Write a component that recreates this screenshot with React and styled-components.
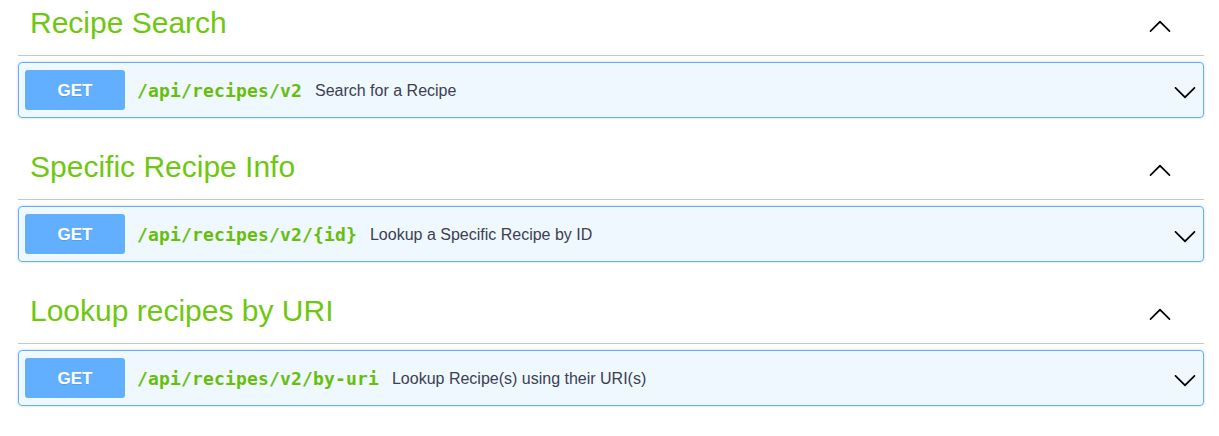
import React from 'react'
import styled, { createGlobalStyle } from 'styled-components'

const GlobalStyle = createGlobalStyle`
	body {
		margin: 0;
		background: #fff;
		font-family: 'Liberation Sans', Arial, sans-serif;
	}
`

const Wrapper = styled.div`
	width: 1186px;
	margin-left: 18px;
`

const Section = styled.section`
	margin-bottom: 26px;
`

const Tag = styled.div`
	display: flex;
	align-items: flex-start;
	justify-content: space-between;
	height: 56px;
	box-sizing: border-box;
	border-bottom: 1px solid rgba(59, 65, 81, 0.3);
	padding: 0 32px 0 12px;
	margin-bottom: 6px;
	cursor: pointer;
`

const TagTitle = styled.h3`
	margin: 0;
	padding-top: 6px;
	font-size: 30px;
	line-height: 34px;
	font-weight: 400;
	color: #6dc80f;
`

const Arrow = styled.svg`
	width: 24px;
	height: 24px;
	margin-top: ${(p) => p.$top}px;
	fill: #000;
	transform: ${(p) => (p.$up ? 'rotate(180deg)' : 'none')};
	flex-shrink: 0;
`

const Opblock = styled.div`
	border: 1px solid #61affe;
	border-radius: 4px;
	background: rgba(97, 175, 254, 0.1);
	box-shadow: 0 0 3px rgba(0, 0, 0, 0.19);
`

const Summary = styled.div`
	display: flex;
	align-items: center;
	padding: 7px 6px;
	cursor: pointer;
`

const Method = styled.span`
	width: 100px;
	height: 40px;
	box-sizing: border-box;
	padding-top: 2px;
	display: flex;
	align-items: center;
	justify-content: center;
	background: #61affe;
	border-radius: 3px;
	color: #fff;
	font-size: 17px;
	font-weight: 700;
	text-shadow: 0 1px 0 rgba(0, 0, 0, 0.1);
	flex-shrink: 0;
`

const Path = styled.span`
	padding: 0 13px 0 12px;
	font-family: 'DejaVu Sans Mono', monospace;
	font-size: 18px;
	letter-spacing: 0.16px;
	font-weight: 700;
	color: #66c00a;
`

const Description = styled.span`
	flex: 1;
	padding-top: 2px;
	font-size: 16px;
	color: #3b4151;
`

const Chevron = ({ up, top }) => (
	<Arrow viewBox='0 0 20 20' $up={up} $top={top}>
		<path d='M17.418 6.109c.272-.268.709-.268.979 0s.271.701 0 .969l-7.908 7.83c-.27.268-.707.268-.979 0l-7.908-7.83c-.27-.268-.27-.701 0-.969.271-.268.709-.268.979 0L10 13.25l7.418-7.141z' />
	</Arrow>
)

const sections = [
	{ title: 'Recipe Search', path: '/api/recipes/v2', summary: 'Search for a Recipe' },
	{ title: 'Specific Recipe Info', path: '/api/recipes/v2/{id}', summary: 'Lookup a Specific Recipe by ID' },
	{ title: 'Lookup recipes by URI', path: '/api/recipes/v2/by-uri', summary: 'Lookup Recipe(s) using their URI(s)' },
]

const App = () => (
	<>
		<GlobalStyle />
		<Wrapper>
			{sections.map((s) => (
				<Section key={s.path}>
					<Tag>
						<TagTitle>{s.title}</TagTitle>
						<Chevron up top={15} />
					</Tag>
					<Opblock>
						<Summary>
							<Method>GET</Method>
							<Path>{s.path}</Path>
							<Description>{s.summary}</Description>
							<Chevron top={3} />
						</Summary>
					</Opblock>
				</Section>
			))}
		</Wrapper>
	</>
)

export default App
